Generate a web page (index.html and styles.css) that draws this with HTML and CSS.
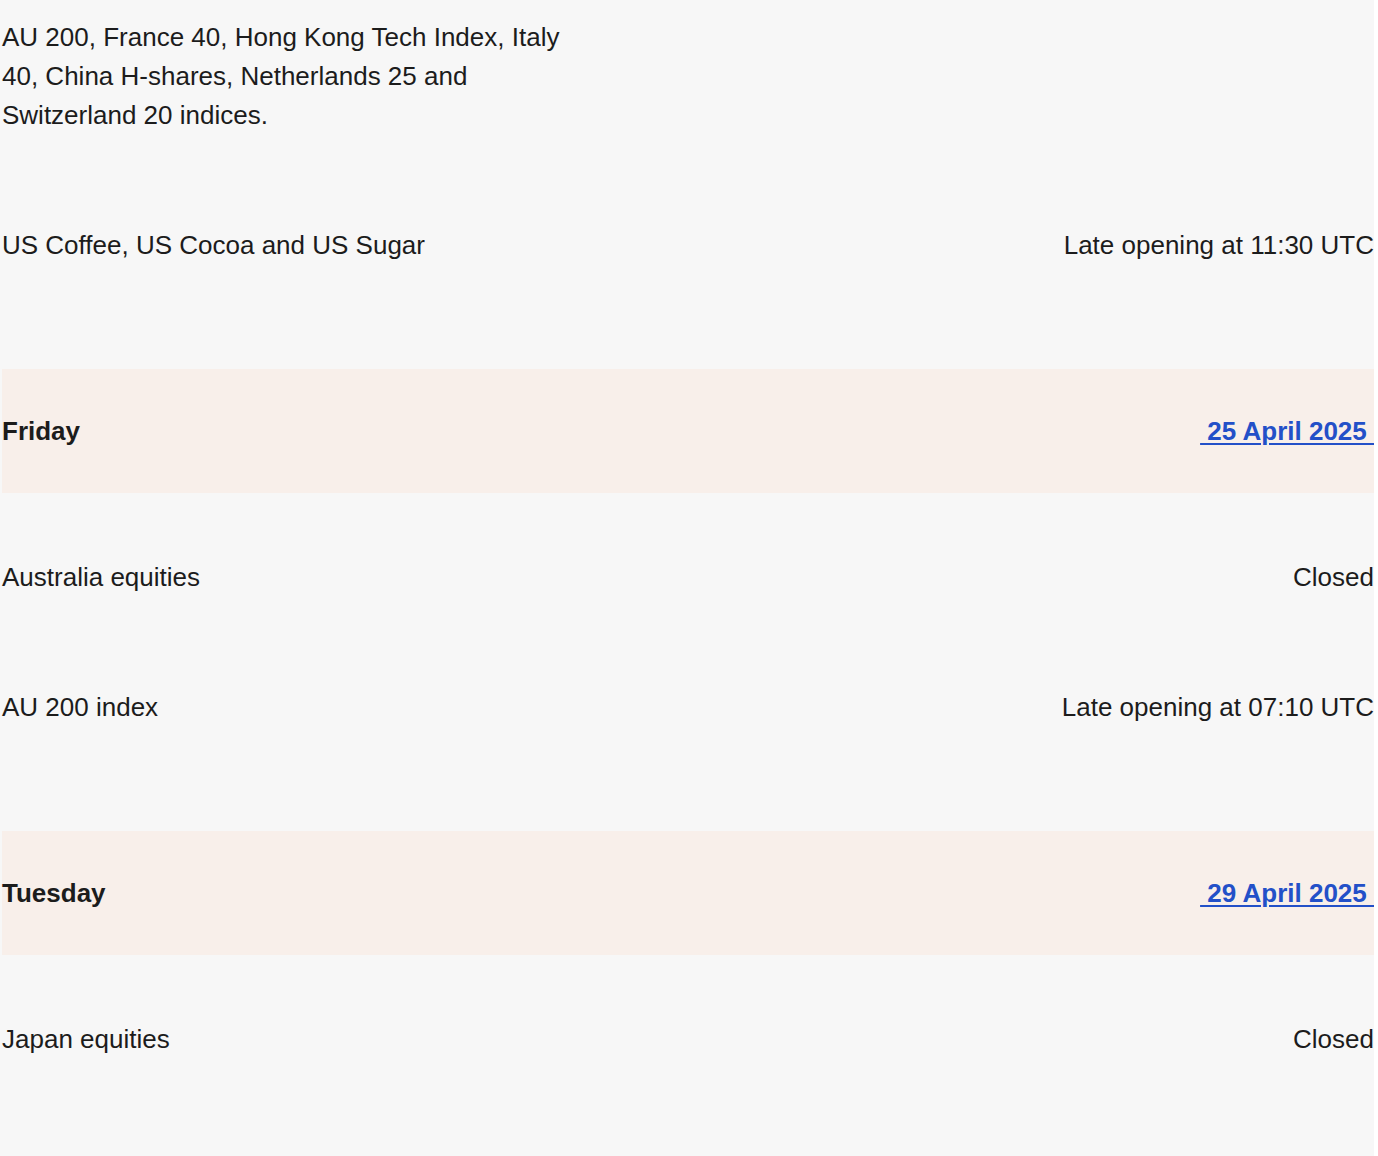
FILE: index.html
```html
<!DOCTYPE html>
<html lang="en">
<head>
<meta charset="utf-8">
<title>Trading hours</title>
<link rel="stylesheet" href="styles.css">
</head>
<body>
<div class="page">
  <div class="section section--first">
    <div class="row row--first">
      <p class="label label--wrap">AU 200, France 40, Hong Kong Tech Index, Italy 40, China H-shares, Netherlands 25 and Switzerland 20 indices.</p>
    </div>
    <div class="row">
      <p class="label">US Coffee, US Cocoa and US Sugar</p>
      <p class="status">Late opening at 11:30 UTC</p>
    </div>
  </div>

  <div class="day">
    <span class="day-name">Friday</span>
    <a class="day-date" href="#"> 25 April 2025 </a>
  </div>
  <div class="section">
    <div class="row">
      <p class="label">Australia equities</p>
      <p class="status">Closed</p>
    </div>
    <div class="row">
      <p class="label">AU 200 index</p>
      <p class="status">Late opening at 07:10 UTC</p>
    </div>
  </div>

  <div class="day">
    <span class="day-name">Tuesday</span>
    <a class="day-date" href="#"> 29 April 2025 </a>
  </div>
  <div class="section">
    <div class="row">
      <p class="label">Japan equities</p>
      <p class="status">Closed</p>
    </div>
  </div>
</div>
</body>
</html>
```

FILE: styles.css
```css
html, body {
  margin: 0;
  padding: 0;
  background: #ffffff;
}

body {
  font-family: "Liberation Sans", Arial, Helvetica, sans-serif;
  font-size: 26px;
  line-height: 39px;
  color: #1c1c1c;
}

.page {
  width: 1372px;
  min-height: 1156px;
  padding-left: 2px;
  background: #f7f7f7;
}

.section {
  padding: 32px 0 46px;
}

.section--first {
  padding-top: 0;
}

.row {
  display: flex;
  justify-content: space-between;
  align-items: flex-start;
  padding: 33px 0 58px;
}

.row--first {
  padding-top: 18px;
}

.label,
.status {
  margin: 0;
}

.label--wrap {
  max-width: 570px;
}

.status {
  text-align: right;
}

.day {
  display: flex;
  justify-content: space-between;
  align-items: center;
  height: 124px;
  background: #f8efea;
  font-weight: 700;
}

.day-name {
  color: #1c1c1c;
}

.day-date {
  color: #2350c8;
  text-decoration: underline;
  text-decoration-thickness: 2px;
  text-underline-offset: 3px;
  white-space: pre;
}
```
